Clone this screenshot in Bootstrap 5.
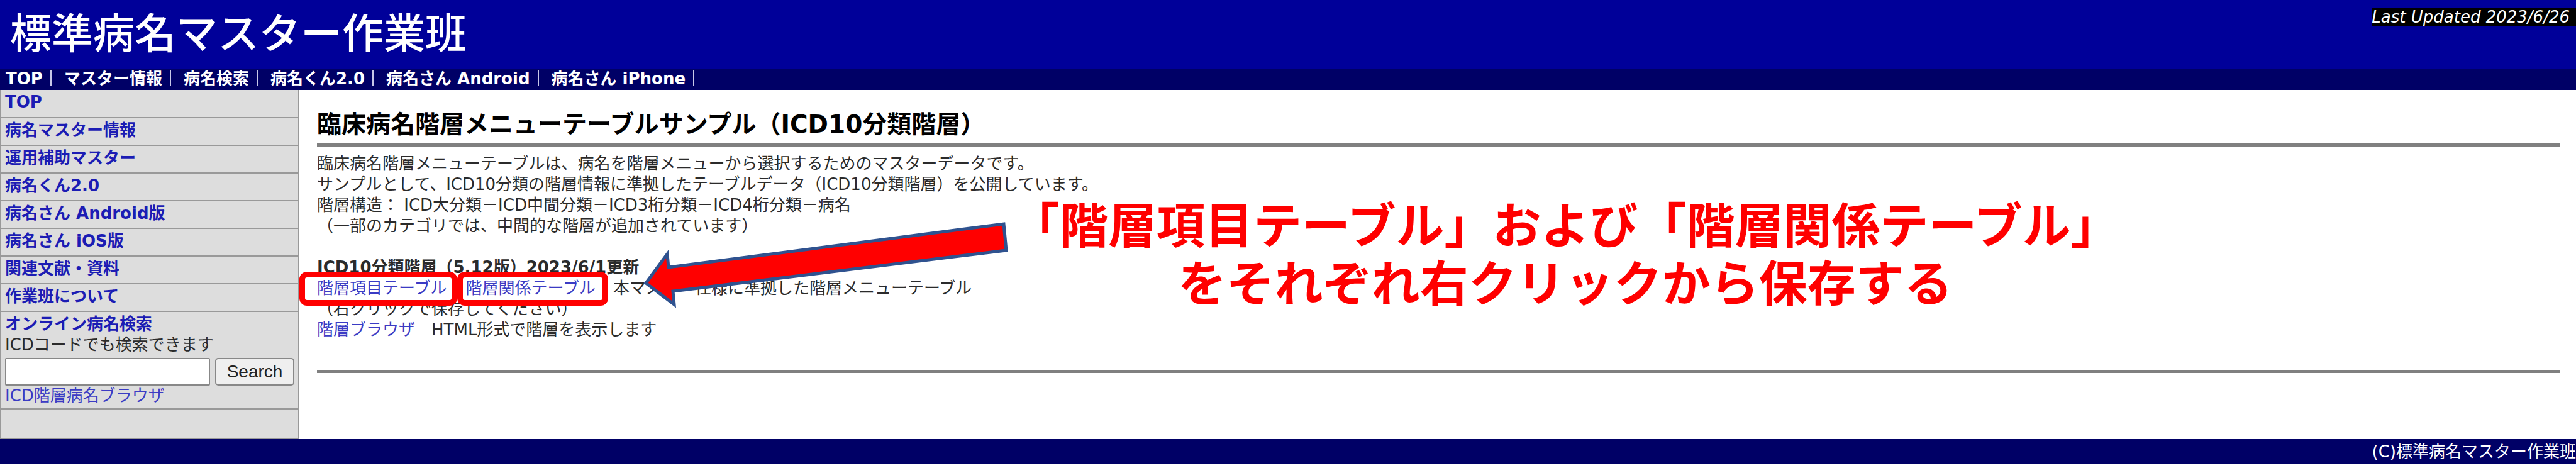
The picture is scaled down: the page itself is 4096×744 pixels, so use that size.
<!DOCTYPE html>
<html lang="ja">
<head>
<meta charset="utf-8">
<meta name="viewport" content="width=device-width, initial-scale=1">
<title>標準病名マスター作業班</title>
<link href="https://cdn.jsdelivr.net/npm/bootstrap@5.3.0/dist/css/bootstrap.min.css" rel="stylesheet">
<style>
  body {
    font-family: "DejaVu Sans", "Noto Sans CJK JP", sans-serif;
    font-size: 26px;
    line-height: 33px;
    color: #2b2b2b;
    background: #fff;
  }
  a { color: #3b3bc4; text-decoration: none; }
  a:hover { text-decoration: underline; }

  .site-header { background: #000099; min-height: 109px; }
  .site-title { font-size: 66px; line-height: 80px; font-weight: 500; padding-left: 16px; }
  .updated { background: #000; line-height: 30px; margin-top: 12px; padding-right: 10px; }

  .site-nav { background: #000066; height: 34px; padding-left: 9px; }
  .site-nav a { color: #fff; }
  .site-nav li { padding-right: 14px; margin-right: 20px; position: relative; line-height: 32px; }
  .site-nav li::after {
    content: ""; position: absolute; right: 0; top: 3px; bottom: 5px;
    width: 2px; background: #c8c8e8;
  }

  .side-menu { flex: 0 0 476px; background: #ddd; border: solid #999; border-width: 0 2px; }
  .side-menu li { min-height: 44px; padding: 3px 6px 0; border-bottom: 2px solid #999; }
  .side-menu li:first-child { min-height: 45px; }
  .side-menu b a { color: #1c1cb4; }
  .side-menu .search-item { min-height: 155px; }
  .side-menu .spare-item { min-height: 47px; }
  .search-box { height: 44px; border: 2px solid #888; border-radius: 2px; background: #fff; font-size: 26px; }
  .search-btn {
    width: 126px; height: 44px; padding: 0; border: 2px solid #888; border-radius: 5px;
    background: #efefef; color: #222;
    font-family: "Liberation Sans", Arial, sans-serif; font-size: 28px; line-height: 36px;
  }

  .content { padding: 31px 26px 0 28px; }
  .content h2 { font-size: 39px; line-height: 48px; font-weight: 700; color: #000; margin: 0 0 6px; }
  .content hr { height: 5px; border: 0; background: #808080; opacity: 1; margin: 0; }
  .content .body-text { margin: 11px 0 47px; }

  .marked { position: relative; margin-right: 30px; }
  .marked::after {
    content: ""; position: absolute; top: -11px; bottom: -13px; left: -28px; right: -17px;
    border: 9px solid #f00; border-radius: 12px;
  }
  .marked + .marked { margin-right: 28px; }
  .marked + .marked::after { left: -13px; right: -20px; }

  .note-arrow { position: absolute; left: 541px; top: 202px; z-index: 2; }
  .note-text {
    position: absolute; left: 1132px; top: 172px; z-index: 2;
    font-size: 77px; line-height: 92px; font-weight: 700; color: #f00;
    white-space: nowrap;
  }

  .site-footer { background: #000066; height: 40px; line-height: 40px; margin-bottom: 6px; }
</style>
</head>
<body>

<header class="site-header d-flex justify-content-between align-items-center text-white">
  <h1 class="site-title m-0">標準病名マスター作業班</h1>
  <em class="updated align-self-start">Last Updated 2023/6/26</em>
</header>

<nav class="site-nav" aria-label="メインメニュー">
  <ul class="list-unstyled d-flex m-0 fw-bold">
    <li><a href="#">TOP</a></li>
    <li><a href="#">マスター情報</a></li>
    <li><a href="#">病名検索</a></li>
    <li><a href="#">病名くん2.0</a></li>
    <li><a href="#">病名さん Android</a></li>
    <li><a href="#">病名さん iPhone</a></li>
  </ul>
</nav>

<div class="d-flex">
  <aside class="side-menu">
    <ul class="list-unstyled m-0">
      <li><b><a href="#">TOP</a></b></li>
      <li><b><a href="#">病名マスター情報</a></b></li>
      <li><b><a href="#">運用補助マスター</a></b></li>
      <li><b><a href="#">病名くん2.0</a></b></li>
      <li><b><a href="#">病名さん Android版</a></b></li>
      <li><b><a href="#">病名さん iOS版</a></b></li>
      <li><b><a href="#">関連文献・資料</a></b></li>
      <li><b><a href="#">作業班について</a></b></li>
      <li class="search-item">
        <b><a href="#">オンライン病名検索</a></b>
        <label class="d-block" for="q">ICDコードでも検索できます</label>
        <form class="d-flex gap-2 mt-1">
          <input class="search-box flex-fill w-50" type="text" id="q" name="q">
          <button class="search-btn" type="button">Search</button>
        </form>
        <a href="#">ICD階層病名ブラウザ</a>
      </li>
      <li class="spare-item"></li>
    </ul>
  </aside>

  <main class="content flex-fill position-relative">
    <h2>臨床病名階層メニューテーブルサンプル（ICD10分類階層）</h2>
    <hr>
    <p class="body-text">
      臨床病名階層メニューテーブルは、病名を階層メニューから選択するためのマスターデータです。<br>
      サンプルとして、ICD10分類の階層情報に準拠したテーブルデータ（ICD10分類階層）を公開しています。<br>
      階層構造： ICD大分類－ICD中間分類－ICD3桁分類－ICD4桁分類－病名<br>
      （一部のカテゴリでは、中間的な階層が追加されています）<br>
      <br>
      <b>ICD10分類階層（5.12版）2023/6/1更新</b><br>
      <a class="marked" href="#">階層項目テーブル</a><a class="marked" href="#">階層関係テーブル</a>本マスター仕様に準拠した階層メニューテーブル<br>
      （右クリックで保存してください）<br>
      <a href="#">階層ブラウザ</a>　HTML形式で階層を表示します
    </p>
    <hr>

    <svg class="note-arrow" width="600" height="160" viewBox="0 0 600 160" aria-hidden="true">
      <path d="M10 105 L44 59 L46 80 L579 11 L583 53 L53 118 L55 139 Z" fill="#f00" stroke="#2f528f" stroke-width="5"/>
    </svg>
    <div class="note-text text-center">「階層項目テーブル」および「階層関係テーブル」<br>をそれぞれ右クリックから保存する</div>
  </main>
</div>

<footer class="site-footer text-white text-end">(C)標準病名マスター作業班</footer>

<script src="https://cdn.jsdelivr.net/npm/bootstrap@5.3.0/dist/js/bootstrap.bundle.min.js"></script>
</body>
</html>
